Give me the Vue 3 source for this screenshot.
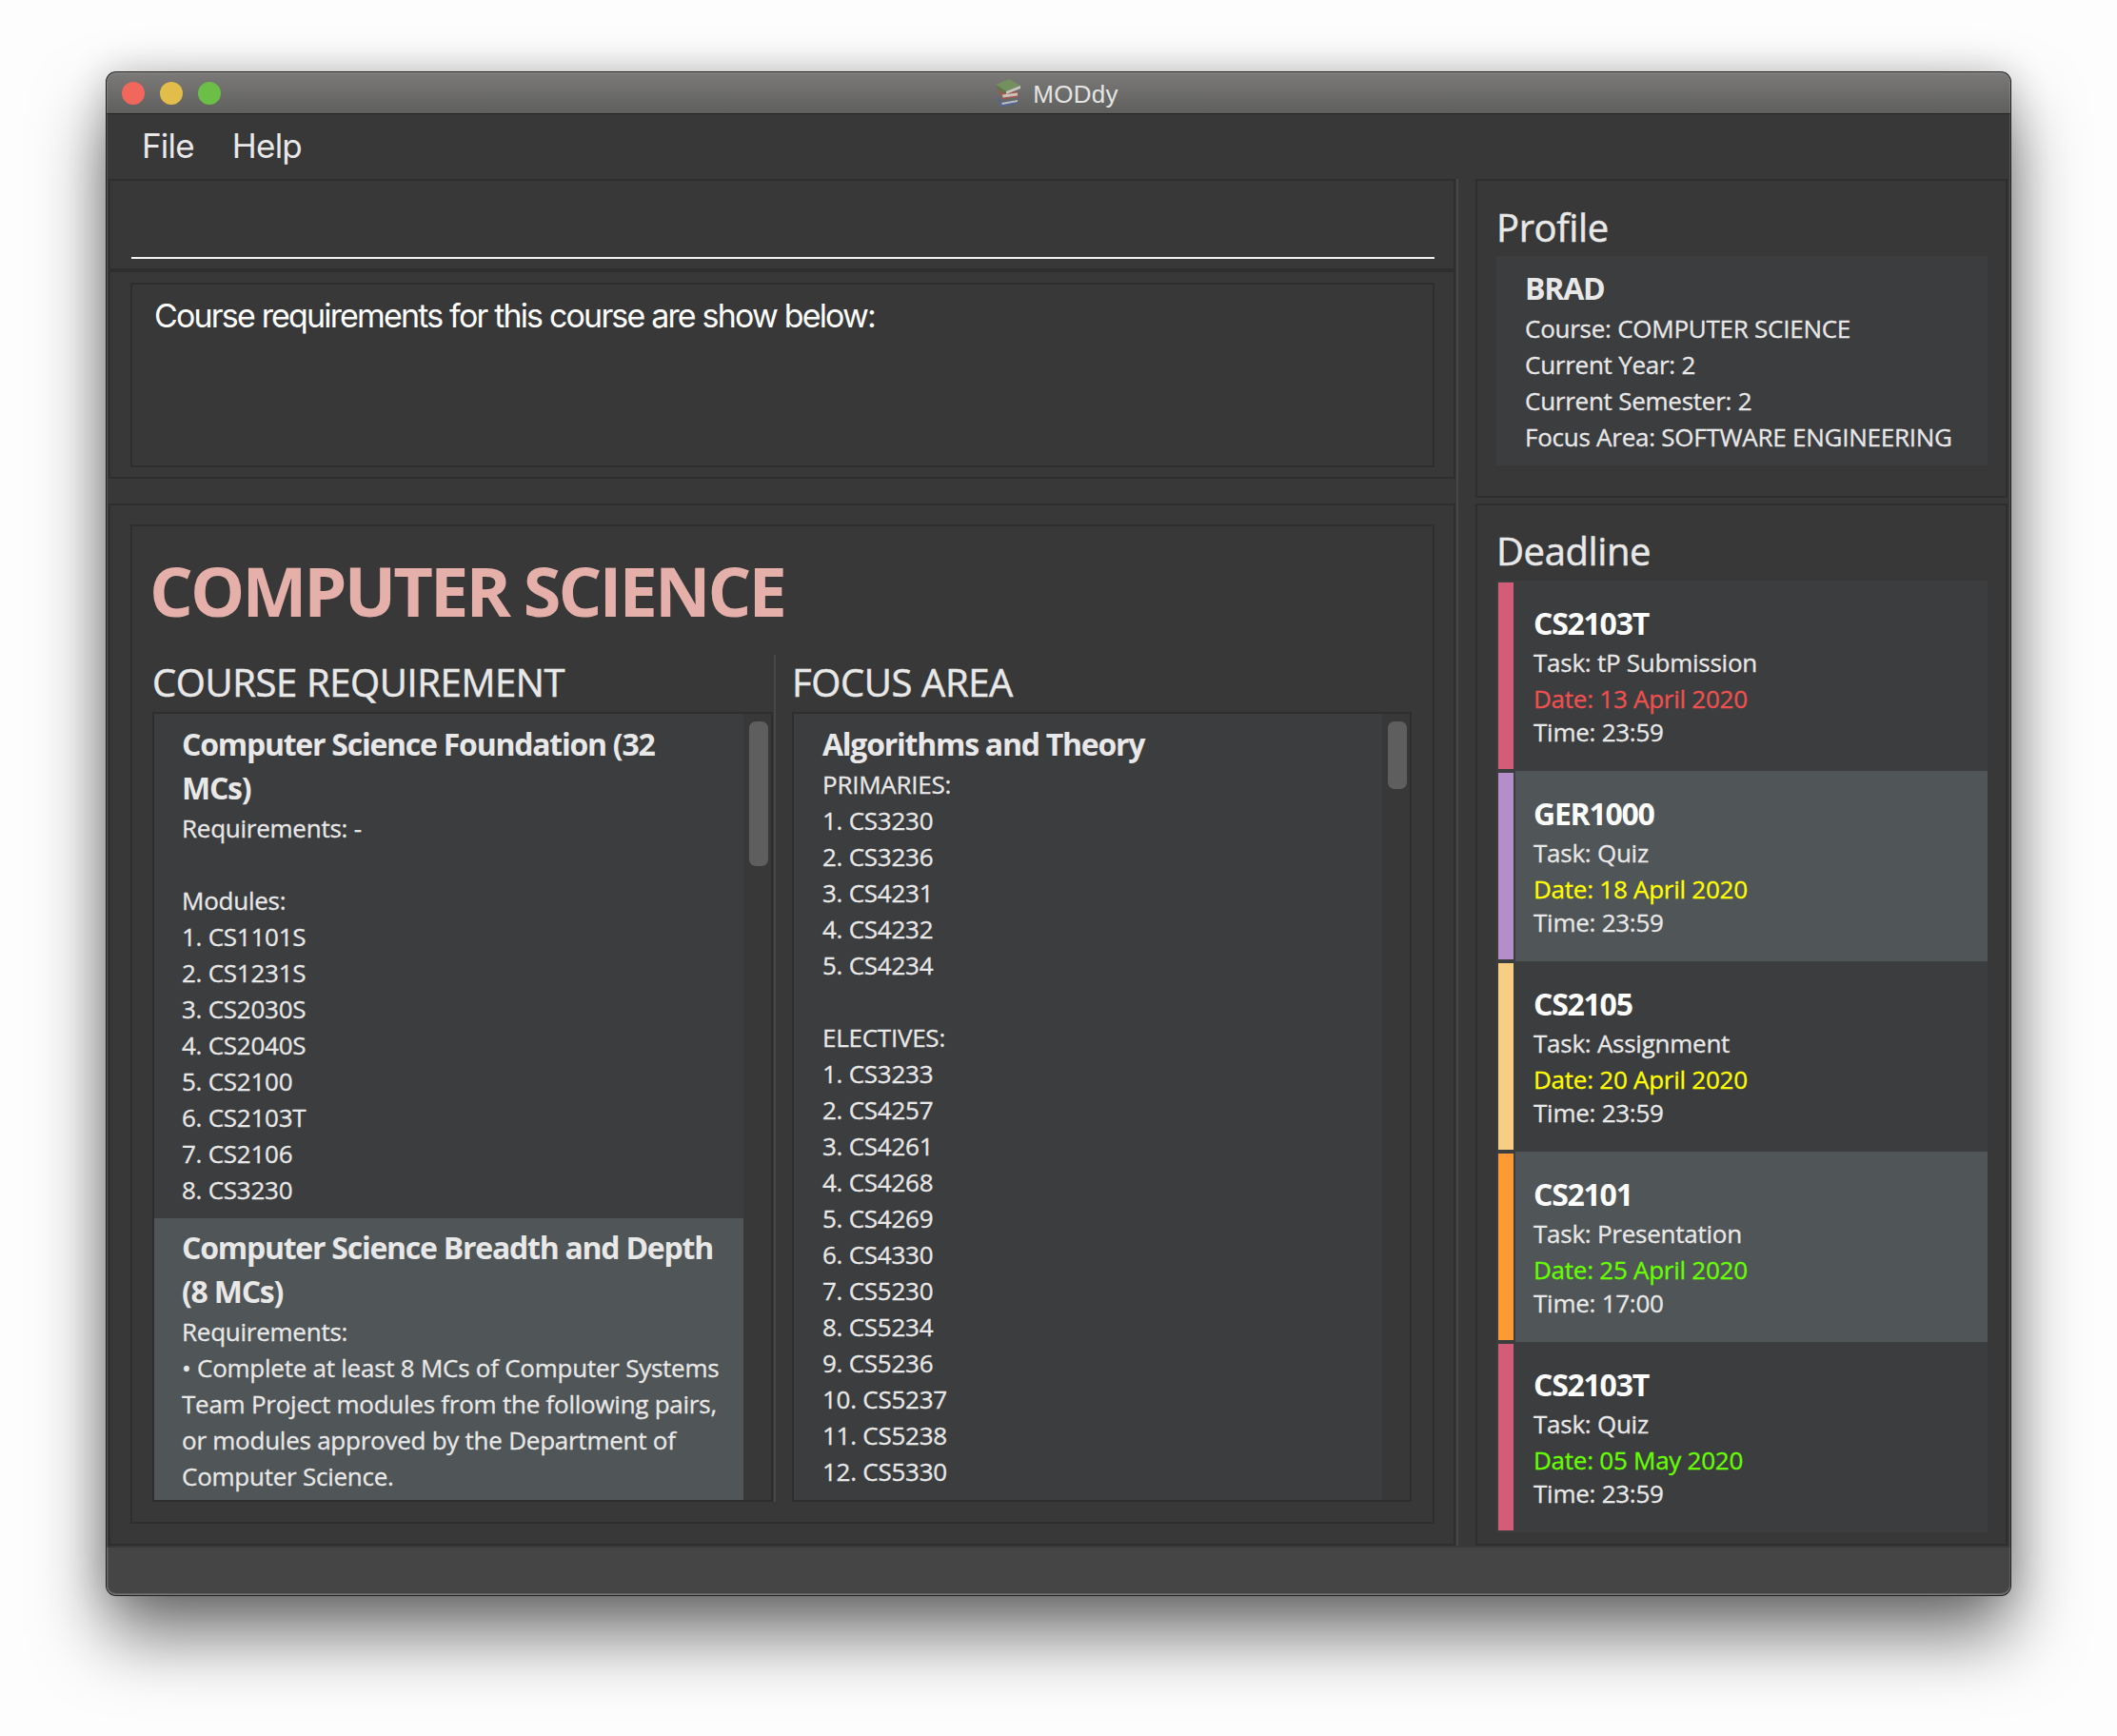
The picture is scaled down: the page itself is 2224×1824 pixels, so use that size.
<template>
  <div class="page">
    <div class="window">
      <div class="titlebar">
        <div class="lights">
          <span class="light red"></span>
          <span class="light yellow"></span>
          <span class="light green"></span>
        </div>
        <svg class="app-icon" viewBox="0 0 28 30" width="28" height="30">
          <polygon points="2,19 5,24 6,29 20,27 25,25 24,22 8,24 4,19" fill="#55648f" />
          <polygon points="7,25 24,22 24,24 8,27" fill="#b9bbc2" />
          <polygon points="3,12 7,17 8,21 24,19 25,16 23,13 8,15 5,11" fill="#a5574b" />
          <polygon points="8,16.5 24,14.5 24,17.5 8.5,19.5" fill="#c9c3bc" />
          <polygon points="1,6 15,0 27,7 12,13" fill="#74905f" />
          <polygon points="1,6 12,13 12,16 3,11" fill="#5f7749" />
          <polygon points="12,13 27,7 27,10 12,16" fill="#c6c8bf" />
        </svg>
        <span class="app-name">MODdy</span>
      </div>

      <div class="menubar">
        <span class="menu-item">File</span>
        <span class="menu-item">Help</span>
      </div>

      <div class="content">
        <div class="main-col">
          <div class="panel command-panel">
            <input class="command-input" type="text" />
          </div>
          <div class="panel result-panel">
            <div class="result-box">Course requirements for this course are show below:</div>
          </div>
          <div class="panel course-panel">
            <div class="course-box">
              <h1 class="course-title">COMPUTER SCIENCE</h1>
              <div class="course-cols">
                <div class="course-col">
                  <h2 class="heading">COURSE REQUIREMENT</h2>
                  <div class="list">
                    <div class="list-body">
                      <div
                        v-for="item in requirements"
                        :key="item.title[0]"
                        class="cell"
                        :class="{ selected: item.selected }"
                      >
                        <div v-for="t in item.title" :key="t" class="cell-title">{{ t }}</div>
                        <div v-for="(l, i) in item.lines" :key="i" class="line">{{ l || '&nbsp;' }}</div>
                      </div>
                    </div>
                    <div class="track">
                      <div class="thumb" :style="{ height: '152px' }"></div>
                    </div>
                  </div>
                </div>
                <div class="col-divider"></div>
                <div class="course-col focus-col">
                  <h2 class="heading">FOCUS AREA</h2>
                  <div class="list">
                    <div class="list-body">
                      <div class="cell">
                        <div class="cell-title">Algorithms and Theory</div>
                        <div v-for="(l, i) in focusLines" :key="i" class="line">{{ l || '&nbsp;' }}</div>
                      </div>
                    </div>
                    <div class="track">
                      <div class="thumb" :style="{ height: '71px' }"></div>
                    </div>
                  </div>
                </div>
              </div>
            </div>
          </div>
        </div>

        <div class="col-rule"></div>

        <div class="side-col">
          <div class="panel profile-panel">
            <h2 class="heading">Profile</h2>
            <div class="profile-card">
              <div class="cell-title">BRAD</div>
              <div class="line">Course: COMPUTER SCIENCE</div>
              <div class="line">Current Year: 2</div>
              <div class="line">Current Semester: 2</div>
              <div class="line">Focus Area: SOFTWARE ENGINEERING</div>
            </div>
          </div>
          <div class="panel deadline-panel">
            <h2 class="heading">Deadline</h2>
            <div class="deadlines">
              <div
                v-for="(d, i) in deadlines"
                :key="i"
                class="deadline"
                :class="{ selected: i % 2 === 1 }"
              >
                <div class="bar" :style="{ background: d.color }"></div>
                <div class="deadline-text">
                  <div class="cell-title white">{{ d.code }}</div>
                  <div class="line">Task: {{ d.task }}</div>
                  <div class="line" :style="{ color: d.dateColor }">Date: {{ d.date }}</div>
                  <div class="line time">Time: {{ d.time }}</div>
                </div>
              </div>
            </div>
          </div>
        </div>
      </div>

      <div class="statusbar"></div>
    </div>
  </div>
</template>

<script setup>
const requirements = [
  {
    title: ['Computer Science Foundation (32', 'MCs)'],
    lines: [
      'Requirements: -',
      '',
      'Modules:',
      '1. CS1101S',
      '2. CS1231S',
      '3. CS2030S',
      '4. CS2040S',
      '5. CS2100',
      '6. CS2103T',
      '7. CS2106',
      '8. CS3230'
    ]
  },
  {
    title: ['Computer Science Breadth and Depth', '(8 MCs)'],
    selected: true,
    lines: [
      'Requirements:',
      '• Complete at least 8 MCs of Computer Systems',
      'Team Project modules from the following pairs,',
      'or modules approved by the Department of',
      'Computer Science.'
    ]
  }
]

const focusLines = [
  'PRIMARIES:',
  '1. CS3230',
  '2. CS3236',
  '3. CS4231',
  '4. CS4232',
  '5. CS4234',
  '',
  'ELECTIVES:',
  '1. CS3233',
  '2. CS4257',
  '3. CS4261',
  '4. CS4268',
  '5. CS4269',
  '6. CS4330',
  '7. CS5230',
  '8. CS5234',
  '9. CS5236',
  '10. CS5237',
  '11. CS5238',
  '12. CS5330'
]

const deadlines = [
  { code: 'CS2103T', task: 'tP Submission', date: '13 April 2020', time: '23:59', color: '#d35c79', dateColor: '#f0504f' },
  { code: 'GER1000', task: 'Quiz', date: '18 April 2020', time: '23:59', color: '#b38ec9', dateColor: '#ffff00' },
  { code: 'CS2105', task: 'Assignment', date: '20 April 2020', time: '23:59', color: '#f8ce83', dateColor: '#ffff00' },
  { code: 'CS2101', task: 'Presentation', date: '25 April 2020', time: '17:00', color: '#fe9a36', dateColor: '#66ff00' },
  { code: 'CS2103T', task: 'Quiz', date: '05 May 2020', time: '23:59', color: '#d35c79', dateColor: '#66ff00' }
]
</script>

<style>
html,
body {
  margin: 0;
  background: #fdfdfd;
  overflow: hidden;
}
</style>

<style scoped>
.page {
  width: 2224px;
  height: 1824px;
  padding: 76px 112px 148px;
  box-sizing: border-box;
  font-family: "Open Sans", "Noto Sans", sans-serif;
}

.window {
  position: relative;
  height: 100%;
  display: flex;
  flex-direction: column;
  background: #383838;
  border-radius: 10px;
  box-shadow: 0 0 0 1px #1f1f1f, 0 42px 75px rgba(0, 0, 0, 0.55), 0 0 40px rgba(0, 0, 0, 0.2);
}

.window::after {
  content: "";
  position: absolute;
  inset: 0;
  border-radius: 10px;
  border: 1px solid rgba(255, 255, 255, 0.14);
  pointer-events: none;
}

.titlebar {
  position: relative;
  height: 44px;
  box-sizing: border-box;
  flex-shrink: 0;
  display: flex;
  align-items: center;
  justify-content: center;
  gap: 12px;
  background: linear-gradient(#7b7a78, #5f5f5e);
  border-bottom: 1px solid #222;
  border-radius: 10px 10px 0 0;
}

.lights {
  position: absolute;
  left: 16px;
  top: 10px;
  display: flex;
  gap: 16px;
}

.light {
  width: 24px;
  height: 24px;
  border-radius: 50%;
}

.red { background: #f2675c; }
.yellow { background: #e2bd4a; }
.green { background: #6cbe47; }

.app-icon {
  margin-left: -4px;
}

.app-name {
  font-family: "Liberation Sans", Arial, sans-serif;
  font-size: 26px;
  line-height: 30px;
  margin-top: 2px;
  color: #e4e4e4;
  letter-spacing: 0.3px;
}

.menubar {
  height: 68px;
  flex-shrink: 0;
  box-sizing: border-box;
  padding: 0 0 3px 37px;
  display: flex;
  align-items: center;
  gap: 40px;
}

.menu-item {
  font-family: Inter, sans-serif;
  font-size: 35px;
  letter-spacing: -0.8px;
  color: #e8e8e8;
}

.content {
  flex: 1;
  min-height: 0;
  display: flex;
  padding: 0 3px 0 2px;
}

.main-col {
  width: 1415px;
  display: flex;
  flex-direction: column;
}

.col-rule {
  width: 2px;
  margin-left: 1px;
  background: #474747;
}

.side-col {
  margin-left: 18px;
  flex: 1;
  min-width: 0;
  display: flex;
  flex-direction: column;
}

.panel {
  border: 2px solid #2e2e2e;
  box-sizing: border-box;
}

.command-panel {
  height: 96px;
  padding: 0 20px 0 22px;
  flex-shrink: 0;
}

.command-input {
  display: block;
  width: 100%;
  height: 82px;
  box-sizing: border-box;
  background: transparent;
  border: none;
  border-bottom: 2px solid #f2f2f2;
  outline: none;
}

.result-panel {
  height: 219px;
  flex-shrink: 0;
  padding: 11px 20px 11px 21px;
}

.result-box {
  height: 194px;
  box-sizing: border-box;
  border: 2px solid #2e2e2e;
  padding: 10px 23px;
  font-family: Inter, sans-serif;
  font-size: 34px;
  line-height: 46px;
  letter-spacing: -1.83px;
  color: #fff;
}

.course-panel {
  flex: 1;
  min-height: 0;
  margin-top: 26px;
  padding: 20px 20px 21px 21px;
}

.course-box {
  height: 100%;
  box-sizing: border-box;
  border: 2px solid #2e2e2e;
  display: flex;
  flex-direction: column;
  padding: 0 22px 21px 21px;
}

.course-title {
  margin: 0 0 0 -3px;
  height: 135px;
  flex-shrink: 0;
  font-size: 72px;
  line-height: 135px;
  font-weight: 700;
  color: #e6b0aa;
  letter-spacing: -2.9px;
  white-space: nowrap;
}

.course-cols {
  flex: 1;
  min-height: 0;
  display: flex;
}

.course-col {
  width: 652px;
  display: flex;
  flex-direction: column;
}

.focus-col {
  width: 651px;
}

.col-divider {
  width: 2px;
  margin: 0 17px 0 1px;
  background: #474747;
}

.heading {
  margin: 0;
  height: 60px;
  flex-shrink: 0;
  font-size: 40px;
  line-height: 60px;
  font-weight: 500;
  letter-spacing: -0.4px;
  -webkit-text-stroke: 0.5px #e8e8e8;
  color: #e8e8e8;
  white-space: nowrap;
}

.course-col .heading {
  line-height: 58px;
}

.list {
  flex: 1;
  min-height: 0;
  border: 2px solid #2e2e2e;
  display: flex;
  overflow: hidden;
}

.list-body {
  flex: 1;
  min-width: 0;
  overflow: hidden;
  background: #3c3d3f;
}

.cell {
  padding: 9px 0 11px 29px;
}

.focus-col .cell {
  padding-left: 30px;
}

.cell.selected {
  padding-top: 8px;
  background: #505557;
}

.cell-title {
  font-size: 32px;
  line-height: 45px;
  margin-bottom: 1px;
  font-weight: 700;
  letter-spacing: -1.25px;
  color: #e8e8e8;
  white-space: nowrap;
}

.cell-title.white {
  margin-bottom: 0;
  color: #fff;
}

.line {
  font-size: 26px;
  font-weight: 500;
  line-height: 38px;
  letter-spacing: -0.25px;
  -webkit-text-stroke: 0.3px currentColor;
  color: #e8e8e8;
  white-space: nowrap;
}

.track {
  width: 29px;
  flex-shrink: 0;
  box-sizing: border-box;
  padding: 8px 3px 0 6px;
  background: #383838;
}

.thumb {
  background: #5e5e5e;
  border-radius: 7px;
}

.profile-panel {
  height: 335px;
  flex-shrink: 0;
  padding: 19px 19px 0 20px;
}

.profile-card {
  height: 220px;
  box-sizing: border-box;
  padding: 11px 0 0 30px;
  background: #3c3d3f;
}

.deadline-panel {
  flex: 1;
  min-height: 0;
  margin-top: 6px;
  padding: 18px 19px 0 20px;
}

.deadlines {
  margin-top: 1px;
}

.deadline {
  height: 200px;
  display: flex;
  background: #3c3d3f;
}

.deadline.selected {
  background: linear-gradient(#505557, #505557) no-repeat 20px 0 / calc(100% - 20px) 100%, #3c3d3f;
}

.bar {
  width: 16px;
  margin: 2px 0 2px 2px;
  flex-shrink: 0;
}

.deadline-text {
  padding: 22px 0 0 21px;
}

.time {
  margin-top: -3px;
}

.statusbar {
  height: 52px;
  flex-shrink: 0;
  box-sizing: border-box;
  background: #454545;
  border-top: 2px solid #3a3a3a;
  border-radius: 0 0 10px 10px;
  box-shadow: inset 0 -2px 0 #636363, inset 2px 0 0 #555;
}
</style>
